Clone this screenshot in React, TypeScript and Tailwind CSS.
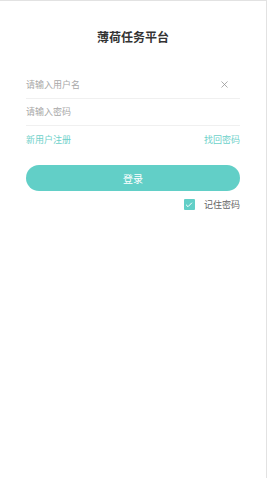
import { Check, X } from "lucide-react";

export default function App() {
  return (
    <div
      className="w-[267px] h-[478px] bg-white border-t border-r border-[#e2e2e2] overflow-hidden"
      style={{ fontFamily: '"Noto Sans CJK SC", "Noto Sans", sans-serif' }}
    >
      <div className="px-[26px] pt-[28px]">
        {/* Title */}
        <div className="h-[16px] leading-[16px] text-center text-[12px] font-bold text-[#333]">
          薄荷任务平台
        </div>

        {/* Username */}
        <div className="mt-[26px] h-[28px] flex items-center justify-between border-b border-[#f0f0f0]">
          <span className="text-[9px] text-[#a8a8a8]">请输入用户名</span>
          <X className="w-[11px] h-[11px] mr-[10px] text-[#8f8f8f]" strokeWidth={1.6} />
        </div>

        {/* Password */}
        <div className="h-[27px] flex items-center border-b border-[#f0f0f0]">
          <span className="text-[9px] text-[#a8a8a8]">请输入密码</span>
        </div>

        {/* Links */}
        <div className="h-[28px] flex items-center justify-between text-[9px] text-[#6ed1ca]">
          <span>新用户注册</span>
          <span>找回密码</span>
        </div>

        {/* Login button */}
        <button className="mt-[11px] w-full h-[26px] rounded-full bg-[#62cfc7] text-white text-[10px] flex items-center justify-center">
          登录
        </button>

        {/* Remember */}
        <div className="mt-[7px] flex items-center justify-end gap-[9px]">
          <div className="w-[11px] h-[11px] bg-[#62cfc7] flex items-center justify-center rounded-[1px]">
            <Check className="w-[8px] h-[8px] text-white" strokeWidth={3} />
          </div>
          <span className="text-[9px] text-[#666]">记住密码</span>
        </div>
      </div>
    </div>
  );
}
